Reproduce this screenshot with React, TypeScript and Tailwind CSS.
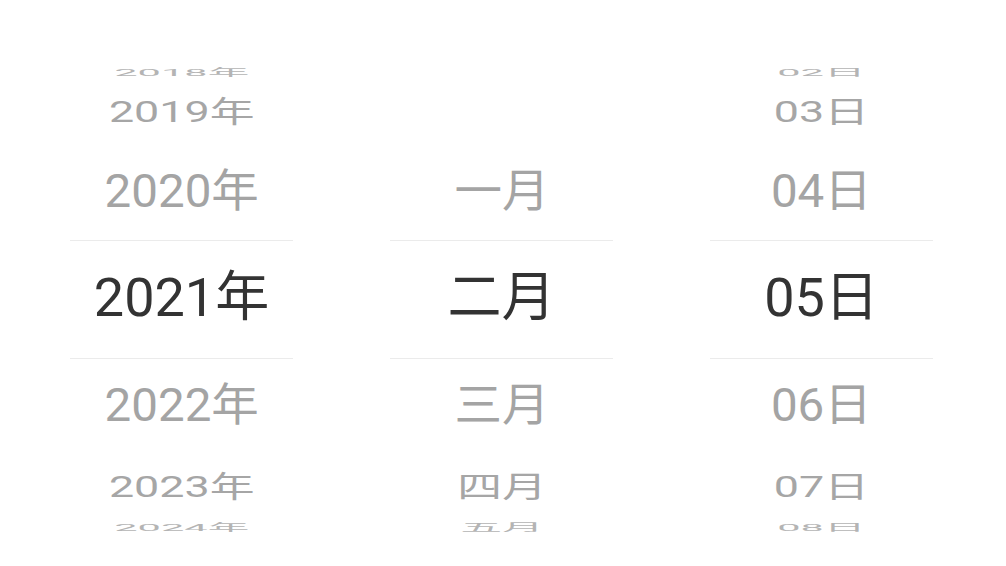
import React from "react";

type Row = { label: string; k: number };

// slot heights and transforms for each offset from the selected row
const slotH: Record<number, string> = {
  [-3]: "h-[16px]",
  [-2]: "h-[62px]",
  [-1]: "h-[99px]",
  0: "h-[119px]",
  1: "h-[90px]",
  2: "h-[72px]",
  3: "h-[10px]",
};

const squash: Record<number, string> = {
  3: "[transform:scale(0.77,0.18)] text-[#b4b4b4]",
  2: "[transform:scale(0.83,0.55)] text-[#a6a6a6]",
  1: "[transform:scale(0.88,0.84)] text-[#a4a4a4]",
  0: "text-[#333333]",
};

const years: Row[] = [
  { label: "2018年", k: -3 },
  { label: "2019年", k: -2 },
  { label: "2020年", k: -1 },
  { label: "2021年", k: 0 },
  { label: "2022年", k: 1 },
  { label: "2023年", k: 2 },
  { label: "2024年", k: 3 },
];

const months: Row[] = [
  { label: "", k: -3 },
  { label: "", k: -2 },
  { label: "一月", k: -1 },
  { label: "二月", k: 0 },
  { label: "三月", k: 1 },
  { label: "四月", k: 2 },
  { label: "五月", k: 3 },
];

const days: Row[] = [
  { label: "02日", k: -3 },
  { label: "03日", k: -2 },
  { label: "04日", k: -1 },
  { label: "05日", k: 0 },
  { label: "06日", k: 1 },
  { label: "07日", k: 2 },
  { label: "08日", k: 3 },
];

const Wheel: React.FC<{ rows: Row[] }> = ({ rows }) => (
  <div className="w-[223px] flex flex-col pt-[63px]">
    {rows.map((r) => (
      <div
        key={r.k}
        className={`${slotH[r.k]} flex items-center justify-center ${
          r.k === 0 ? "border-y border-[#ebebeb] pb-[3px]" : "pt-[3px]"
        }`}
      >
        <span
          className={`block leading-none whitespace-nowrap text-[54px] ${squash[Math.abs(r.k)]}`}
        >
          {r.label}
        </span>
      </div>
    ))}
  </div>
);

export default function App() {
  return (
    <div className="w-[1006px] h-[566px] bg-white overflow-hidden flex gap-[97px] pl-[70px] font-['Roboto','Noto_Sans_CJK_SC',sans-serif]">
      <Wheel rows={years} />
      <Wheel rows={months} />
      <Wheel rows={days} />
    </div>
  );
}
